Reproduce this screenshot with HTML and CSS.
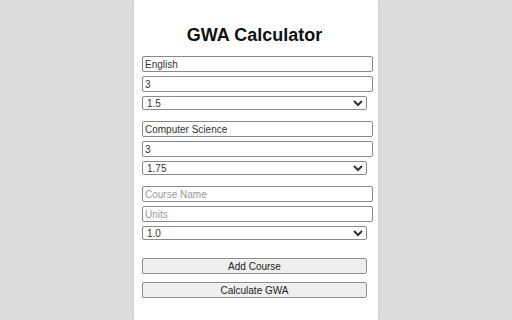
FILE: index.html
```html
<!DOCTYPE html>
<html lang="en">
<head>
<meta charset="utf-8">
<title>GWA Calculator</title>
<link rel="stylesheet" href="styles.css">
</head>
<body>
<main class="panel">
  <h1 class="title">GWA Calculator</h1>
  <div class="course">
    <input class="field" type="text" value="English" placeholder="Course Name">
    <input class="field" type="text" value="3" placeholder="Units">
    <select class="grade"><option>1.0</option><option>1.25</option><option selected>1.5</option><option>1.75</option><option>2.0</option></select>
  </div>
  <div class="course">
    <input class="field" type="text" value="Computer Science" placeholder="Course Name">
    <input class="field" type="text" value="3" placeholder="Units">
    <select class="grade"><option>1.0</option><option>1.25</option><option>1.5</option><option selected>1.75</option><option>2.0</option></select>
  </div>
  <div class="course">
    <input class="field" type="text" placeholder="Course Name">
    <input class="field" type="text" placeholder="Units">
    <select class="grade"><option selected>1.0</option><option>1.25</option><option>1.5</option><option>1.75</option><option>2.0</option></select>
  </div>
  <div class="actions">
    <button class="btn" type="button">Add Course</button>
    <button class="btn" type="button">Calculate GWA</button>
  </div>
</main>
</body>
</html>
```
FILE: styles.css
```css
html, body {
  margin: 0;
  height: 100%;
}
body {
  background: #dcdcdc;
  font-family: "Liberation Sans", Arial, sans-serif;
  overflow: hidden;
}
.panel {
  width: 225px;
  min-height: 100%;
  margin: 0 auto;
  padding: 0 11px 0 8px;
  background: #ffffff;
  box-shadow: 0 0 3px rgba(0, 0, 0, 0.08);
  box-sizing: content-box;
}
.title {
  margin: 0;
  padding: 24px 0 10px;
  font-size: 18px;
  line-height: 22px;
  font-weight: bold;
  text-align: center;
  color: #111;
}
.course {
  display: flex;
  flex-direction: column;
  gap: 4px;
  margin-bottom: 11px;
}
.field {
  width: 100%;
  height: 12px;
  padding: 1px 2px;
  margin: 0;
  border: 1px solid #8a8a8a;
  border-radius: 2px;
  font-family: "Liberation Sans", Arial, sans-serif;
  font-size: 10px;
  color: #333;
  background: #fff;
}
.field::placeholder {
  color: #9a9a9a;
}
.grade {
  width: 100%;
  height: 14px;
  padding: 0;
  margin: 0;
  border: 1px solid #8a8a8a;
  border-radius: 2px;
  font-family: "Liberation Sans", Arial, sans-serif;
  font-size: 10px;
  color: #333;
  background: #fff;
}
.actions {
  display: flex;
  flex-direction: column;
  gap: 8px;
  padding-top: 7px;
}
.btn {
  width: 100%;
  height: 16px;
  padding: 0;
  margin: 0;
  border: 1px solid #8f8f8f;
  border-radius: 2px;
  background: #efefef;
  font-family: "Liberation Sans", Arial, sans-serif;
  font-size: 10px;
  color: #222;
}
```
